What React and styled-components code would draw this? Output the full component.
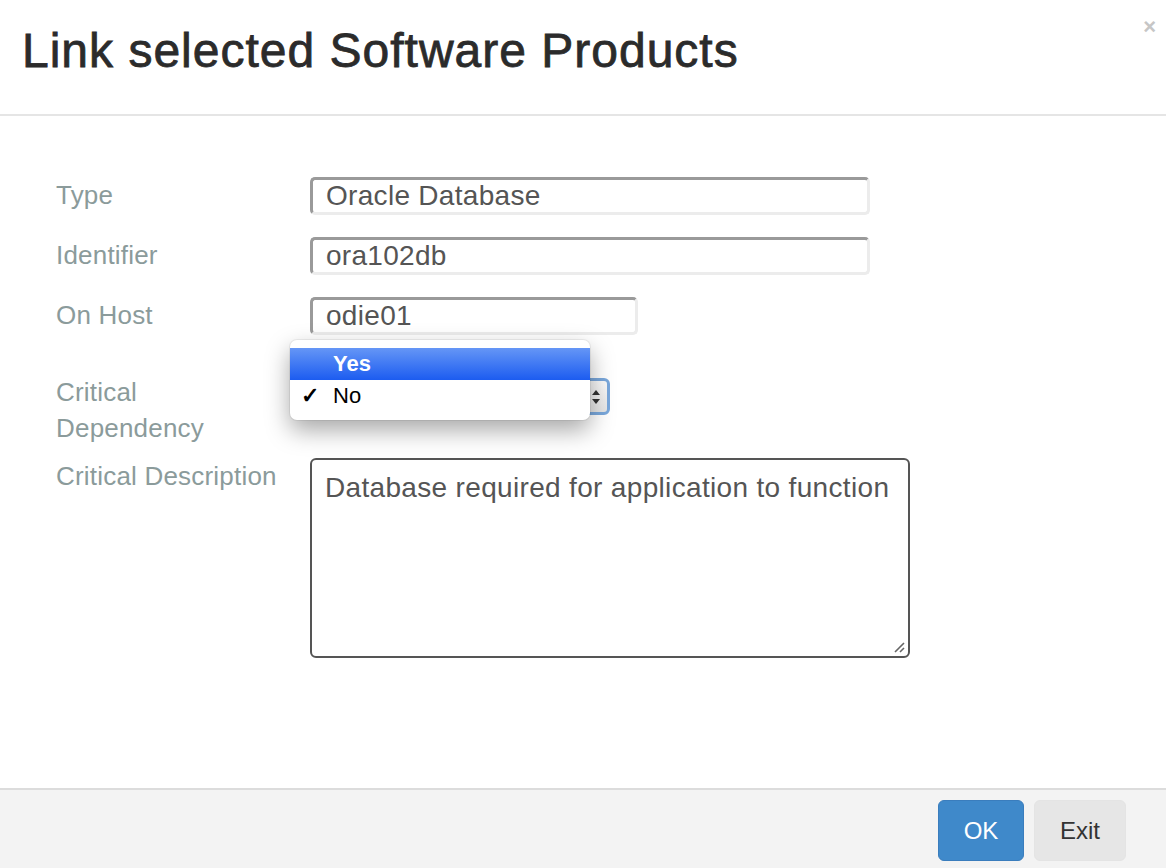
import React from "react";
import styled, { createGlobalStyle } from "styled-components";

const GlobalStyle = createGlobalStyle`
  html, body {
    margin: 0;
    padding: 0;
    background: #fff;
  }
  body {
    font-family: "Liberation Sans", Arial, Helvetica, sans-serif;
  }
`;

const Modal = styled.div`
  width: 1166px;
  height: 868px;
  display: flex;
  flex-direction: column;
  background: #fff;
  overflow: hidden;
`;

const Header = styled.div`
  position: relative;
  box-sizing: border-box;
  height: 116px;
  border-bottom: 2px solid #e5e5e5;
  padding: 0 22px 14px;
  display: flex;
  align-items: center;
`;

const Title = styled.h1`
  margin: 0;
  font-size: 48px;
  font-weight: 400;
  color: #2b2b2b;
  -webkit-text-stroke: 0.8px #2b2b2b;
  letter-spacing: 1px;
`;

const Close = styled.span`
  position: absolute;
  top: 16px;
  right: 10px;
  font-size: 22px;
  font-weight: 700;
  color: #c6c6c6;
  line-height: 1;
`;

const Body = styled.div`
  flex: 1;
  padding: 61px 56px 0;
`;

const Row = styled.div`
  display: flex;
  align-items: flex-start;
  margin-top: ${(p) => p.$mt || 0}px;
`;

const Label = styled.div`
  width: 254px;
  flex: none;
  font-size: 26px;
  line-height: 36px;
  letter-spacing: 0.2px;
  color: #8b9b9b;
`;

const TextInput = styled.input`
  box-sizing: border-box;
  width: ${(p) => p.$w}px;
  height: 38px;
  border: 3px solid;
  border-color: #9a9a9a #ececec #ececec #9a9a9a;
  border-radius: 5px;
  padding: 0 0 0 13px;
  font-family: inherit;
  font-size: 28px;
  letter-spacing: 0.3px;
  color: #555;
  background: #fff;
  outline: none;
`;

const SelectWrap = styled.div`
  position: relative;
  margin-top: 4px;
`;

const SelectBox = styled.div`
  box-sizing: border-box;
  width: 300px;
  height: 37px;
  border: 3px solid #7aa8dc;
  border-radius: 6px;
  background: linear-gradient(#fbfbfb, #e6e6e6);
  display: flex;
  align-items: center;
  justify-content: flex-end;
  padding-right: 6px;
`;

const Popup = styled.div`
  position: absolute;
  left: -20px;
  top: -38px;
  width: 300px;
  padding: 8px 0;
  background: #fff;
  border-radius: 7px;
  box-shadow: 0 10px 24px rgba(0, 0, 0, 0.35), 0 0 0 1px rgba(0, 0, 0, 0.06);
  font-size: 22px;
`;

const Option = styled.div`
  height: 32px;
  display: flex;
  align-items: center;
  padding-left: 43px;
  position: relative;
  color: ${(p) => (p.$active ? "#fff" : "#000")};
  font-weight: ${(p) => (p.$active ? 700 : 400)};
  background: ${(p) =>
    p.$active ? "linear-gradient(#6596f6, #1c5cf0)" : "transparent"};
`;

const Check = styled.span`
  position: absolute;
  left: 11px;
  top: 3px;
  font-size: 22px;
  font-weight: 700;
`;

const TextArea = styled.div`
  position: relative;
  box-sizing: border-box;
  width: 600px;
  height: 200px;
  border: 2px solid #555;
  border-radius: 6px;
  padding: 12px 13px;
  font-size: 28px;
  line-height: 32px;
  letter-spacing: 0.33px;
  color: #555;
`;

const Grip = styled.svg`
  position: absolute;
  right: 2px;
  bottom: 2px;
`;

const Footer = styled.div`
  box-sizing: border-box;
  height: 80px;
  border-top: 2px solid #dcdcdc;
  background: #f3f3f3;
  display: flex;
  justify-content: flex-end;
  align-items: flex-start;
  padding: 10px 40px 0 0;
  gap: 10px;
`;

const Button = styled.button`
  height: 61px;
  width: ${(p) => p.$w}px;
  border-radius: 6px;
  font-family: inherit;
  font-size: 24px;
  border: 1px solid ${(p) => (p.$primary ? "#3a7dbd" : "#e4e4e4")};
  background: ${(p) => (p.$primary ? "#3f89ca" : "#e6e6e6")};
  color: ${(p) => (p.$primary ? "#fff" : "#333")};
  padding: 0;
`;

export default function App() {
  return (
    <>
      <GlobalStyle />
      <Modal>
        <Header>
          <Title>Link selected Software Products</Title>
          <Close>×</Close>
        </Header>
        <Body>
          <Row>
            <Label>Type</Label>
            <TextInput $w={560} readOnly value="Oracle Database" />
          </Row>
          <Row $mt={22}>
            <Label>Identifier</Label>
            <TextInput $w={560} readOnly value="ora102db" />
          </Row>
          <Row $mt={22}>
            <Label>On Host</Label>
            <TextInput $w={328} readOnly value="odie01" />
          </Row>
          <Row $mt={39}>
            <Label>
              Critical
              <br />
              Dependency
            </Label>
            <SelectWrap>
              <SelectBox>
                <svg width="10" height="18" viewBox="0 0 10 18">
                  <path d="M5 2 L9 7 L1 7 Z" fill="#333" />
                  <path d="M5 16 L9 11 L1 11 Z" fill="#333" />
                </svg>
              </SelectBox>
              <Popup>
                <Option $active>Yes</Option>
                <Option>
                  <Check>✓</Check>
                  No
                </Option>
              </Popup>
            </SelectWrap>
          </Row>
          <Row $mt={12}>
            <Label>Critical Description</Label>
            <TextArea>
              Database required for application to function
              <Grip width="14" height="14" viewBox="0 0 14 14">
                <path d="M3 12 L12 3 M8 12 L12 8" stroke="#666" strokeWidth="1.6" />
              </Grip>
            </TextArea>
          </Row>
        </Body>
        <Footer>
          <Button $primary $w={86}>OK</Button>
          <Button $w={92}>Exit</Button>
        </Footer>
      </Modal>
    </>
  );
}
